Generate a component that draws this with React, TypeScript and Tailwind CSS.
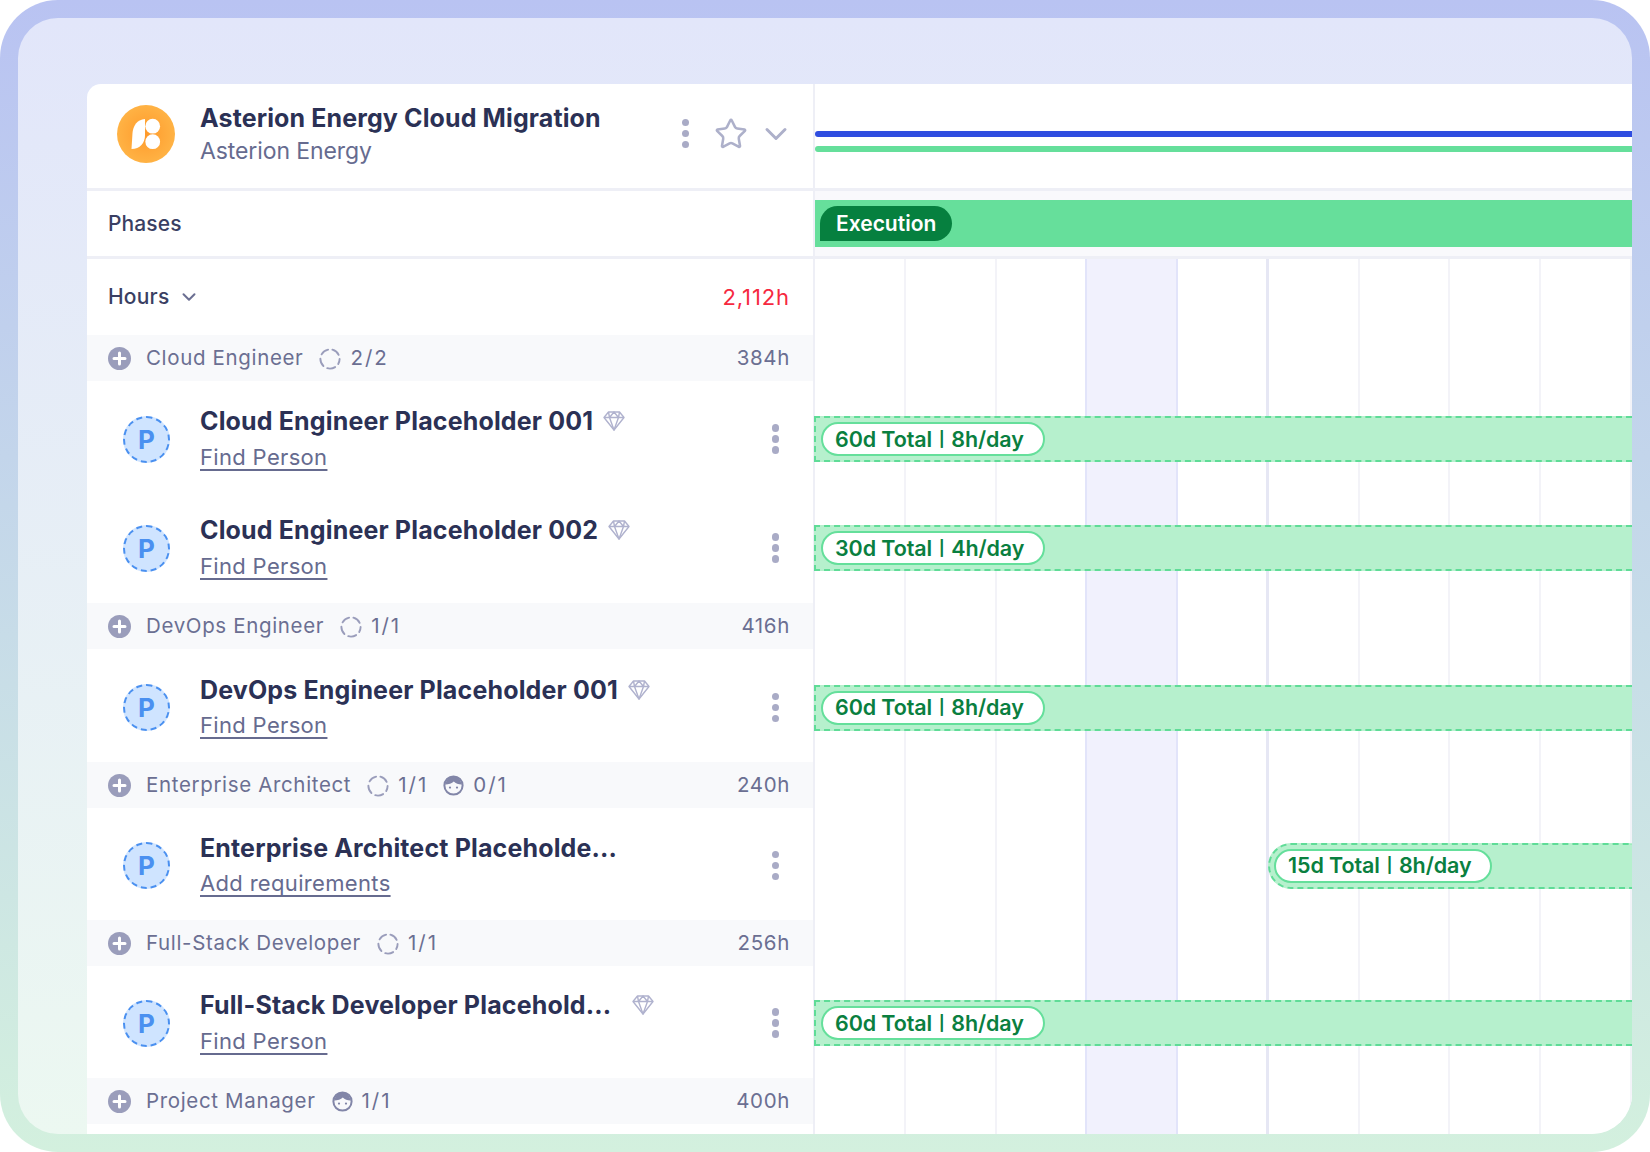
import React from "react";
import { Star, ChevronDown } from "lucide-react";

function Logo() {
  return (
    <svg width="58" height="58" viewBox="0 0 58 58" className="shrink-0">
      <defs>
        <radialGradient id="lg" cx="50%" cy="50%" r="55%">
          <stop offset="0%" stopColor="#ff9a2b" />
          <stop offset="100%" stopColor="#ffb547" />
        </radialGradient>
      </defs>
      <circle cx="29" cy="29" r="29" fill="url(#lg)" />
      <path d="M28 14 C20 14.5 16 21 15.5 28 L14.5 44 C23 44 28 38 28 30 Z" fill="#fff" />
      <circle cx="35.7" cy="21.2" r="7.4" fill="#fff" />
      <circle cx="35.7" cy="36.7" r="7.4" fill="#fff" />
    </svg>
  );
}

function Dots() {
  return (
    <div className="flex flex-col gap-[3.5px]">
      <span className="size-[7.5px] rounded-full bg-[#a9abc6]" />
      <span className="size-[7.5px] rounded-full bg-[#a9abc6]" />
      <span className="size-[7.5px] rounded-full bg-[#a9abc6]" />
    </div>
  );
}

function PlusCircle() {
  return (
    <svg width="23" height="23" viewBox="0 0 23 23" className="shrink-0">
      <circle cx="11.5" cy="11.5" r="11.5" fill="#9a9dbb" />
      <path d="M11.5 6v11M6 11.5h11" stroke="#fff" strokeWidth="3" strokeLinecap="round" />
    </svg>
  );
}

function DashCircle() {
  return (
    <svg width="22" height="22" viewBox="0 0 22 22" className="shrink-0">
      <circle cx="11" cy="11" r="9.6" fill="none" stroke="#9a9dbb" strokeWidth="1.9" strokeDasharray="8.2 4.4" strokeDashoffset="3" strokeLinecap="round" />
    </svg>
  );
}

function Face() {
  return (
    <svg width="21" height="21" viewBox="0 0 21 21" className="shrink-0">
      <circle cx="10.5" cy="10.5" r="9.1" fill="none" stroke="#8286a8" strokeWidth="2" />
      <path d="M2.5 9.5 C5.5 9.5 9 8.5 10.8 6.5 C12.5 8.5 15.5 9.5 18.5 9.5 C18 4.5 14.5 1.5 10.5 1.5 C6.5 1.5 3 4.5 2.5 9.5Z" fill="#8286a8" />
      <circle cx="7" cy="12.6" r="1.1" fill="#8286a8" />
      <circle cx="14" cy="12.6" r="1.1" fill="#8286a8" />
    </svg>
  );
}

function Diamond() {
  return (
    <svg width="22" height="20" viewBox="0 0 22 20" fill="none" stroke="#b0b2ce" strokeWidth="1.4" strokeLinejoin="round" className="shrink-0">
      <path d="M5.5 1h11l4.5 5.5L11 19 1 6.5Z" />
      <path d="M1 6.5h20M6.5 6.5 11 19l4.5-12.5M5.5 1l1 5.5L11 1l4.5 5.5 1-5.5" />
    </svg>
  );
}

function GroupHeader({ name, right, chips }: { name: string; right: string; chips: { icon: "dash" | "face"; text: string }[] }) {
  return (
    <div className="h-[46px] flex items-center pl-[21px] pr-[23px] pt-[1px] bg-[#f8f9fb] text-[#6b6f92] text-[20.5px] tracking-[0.65px]">
      <PlusCircle />
      <span className="ml-[15px] mr-[16px]">{name}</span>
      {chips.map((c, i) => (
        <span key={i} className="flex items-center gap-[9px] mr-[15px]">
          {c.icon === "dash" ? <DashCircle /> : <Face />}
          <span className="tracking-[2px]">{c.text}</span>
        </span>
      ))}
      <span className="ml-auto">{right}</span>
    </div>
  );
}

function Person({ title, link, sized, gap }: { title: string; link: string; sized: string; gap: string }) {
  return (
    <div className={`${sized} flex items-center pl-[36px] pr-[34px] bg-white`}>
      <div className="size-[47px] shrink-0 rounded-full bg-[#cfe4ff] border-2 border-dashed border-[#4a90f0] flex items-center justify-center text-[#4a90f0] font-bold text-[26px]">
        P
      </div>
      <div className="ml-[30px] flex-1 min-w-0">
        <div className="flex items-center h-[36px] pt-[1px]">
          <span className="text-[#2b3155] font-bold text-[25px] tracking-[0.15px] whitespace-nowrap">{title}</span>
          <span className={`${gap} -mt-[2px]`}>
            <Diamond />
          </span>
        </div>
        <a className="block text-[#666b8f] text-[22px] leading-[35px] tracking-[0.33px] underline underline-offset-[4px] decoration-[1.5px]">{link}</a>
      </div>
      <Dots />
    </div>
  );
}

function Bar({ text, round }: { text: string; round?: boolean }) {
  const [a, b] = text.split(" | ");
  return (
    <div
      className={
        round
          ? "ml-[453px] h-[46px] flex-1 flex items-center pl-[4px] bg-[#b6f0cd] border-2 border-r-0 border-dashed border-[#5fdc97] rounded-l-[23px]"
          : "-ml-[1px] h-[46px] flex-1 flex items-center pl-[5px] bg-[#b6f0cd] border-2 border-r-0 border-dashed border-[#5fdc97]"
      }
    >
      <span className="h-[34px] pl-[12px] pr-[19px] flex items-center rounded-full bg-white border-2 border-[#65df9b] text-[#0a7f3f] font-semibold text-[21.5px] tracking-[-0.1px] whitespace-pre">
        {a + " "}
        <span className="text-[15px] font-bold mx-[1.5px]">|</span>
        {" " + b}
      </span>
    </div>
  );
}

const rows = [
  { kind: "group", name: "Cloud Engineer", right: "384h", chips: [{ icon: "dash", text: "2/2" }] },
  { kind: "person", title: "Cloud Engineer Placeholder 001", link: "Find Person", sized: "h-[112px] pt-[4px]", gap: "ml-[10px]", bar: "60d Total | 8h/day" },
  { kind: "person", title: "Cloud Engineer Placeholder 002", link: "Find Person", sized: "h-[110px]", gap: "ml-[10px]", bar: "30d Total | 4h/day" },
  { kind: "group", name: "DevOps Engineer", right: "416h", chips: [{ icon: "dash", text: "1/1" }] },
  { kind: "person", title: "DevOps Engineer Placeholder 001", link: "Find Person", sized: "h-[113px] pt-[4px]", gap: "ml-[10px]", bar: "60d Total | 8h/day" },
  { kind: "group", name: "Enterprise Architect", right: "240h", chips: [{ icon: "dash", text: "1/1" }, { icon: "face", text: "0/1" }] },
  { kind: "person", title: "Enterprise Architect Placeholde...", link: "Add requirements", sized: "h-[112px] pt-[3px]", gap: "hidden", bar: "15d Total | 8h/day", round: true },
  { kind: "group", name: "Full-Stack Developer", right: "256h", chips: [{ icon: "dash", text: "1/1" }] },
  { kind: "person", title: "Full-Stack Developer Placehold...", link: "Find Person", sized: "h-[112px] pt-[2px]", gap: "ml-[21px]", bar: "60d Total | 8h/day" },
  { kind: "group", name: "Project Manager", right: "400h", chips: [{ icon: "face", text: "1/1" }] },
] as any[];

const gridCols = [
  "border-r-2 border-[#f3f3f8]",
  "border-r-2 border-[#f3f3f8]",
  "border-r-2 border-[#e2e4fa]",
  "border-r-2 border-[#e2e4fa] bg-[#f1f1fd]",
  "border-r-[3px] border-[#e6e7f4]",
  "border-r-2 border-[#f3f3f8]",
  "border-r-2 border-[#f3f3f8]",
  "border-r-2 border-[#f3f3f8]",
  "border-r-2 border-[#f3f3f8]",
];

export default function App() {
  return (
    <div className="w-[1650px] h-[1152px] bg-white" style={{ fontFamily: "Inter, 'Liberation Sans', sans-serif" }}>
      <div className="size-full rounded-[58px] p-[18px] bg-linear-to-b from-[#b9c3f2] to-[#d3f0de]">
        <div className="size-full rounded-[40px] overflow-hidden pl-[69px] pt-[66px] bg-linear-to-b from-[#e2e6fa] to-[#ecf8f1]">
          <div className="size-full bg-white rounded-tl-[14px] flex overflow-hidden">
            {/* left */}
            <div className="w-[726px] shrink-0 flex flex-col">
              <div className="h-[107px] shrink-0 border-b-[3px] border-[#eeeff6] flex items-center pl-[30px] pr-[19px] pb-[5px]">
                <Logo />
                <div className="ml-[25px] flex-1 pt-[2px]">
                  <div className="text-[#2b3155] font-bold text-[25px] leading-[33px] tracking-[0.12px]">Asterion Energy Cloud Migration</div>
                  <div className="text-[#666b8f] text-[23px] leading-[33px] tracking-[-0.1px]">Asterion Energy</div>
                </div>
                <Dots />
                <Star className="ml-[25px] text-[#adb0ca]" size={34} strokeWidth={1.8} />
                <ChevronDown className="ml-[10px] text-[#adb0ca]" size={36} strokeWidth={2} />
              </div>
              <div className="h-[68px] shrink-0 border-b-[3px] border-[#eeeff6] flex items-center pl-[21px] pt-[1px] text-[#3a3f63] text-[21px] font-medium tracking-[0.1px]">Phases</div>
              <div className="h-[76px] shrink-0 flex items-center pl-[21px] pr-[23px] text-[21px] tracking-[0.2px]">
                <span className="text-[#3a3f63] font-medium">Hours</span>
                <ChevronDown className="ml-[9px] text-[#6b6f92]" size={22} strokeWidth={2.2} />
                <span className="ml-auto text-[#f6283f] text-[22px] tracking-[0.9px]">2,112h</span>
              </div>
              {rows.map((r, i) =>
                r.kind === "group" ? (
                  <GroupHeader key={i} name={r.name} right={r.right} chips={r.chips} />
                ) : (
                  <Person key={i} title={r.title} link={r.link} sized={r.sized} gap={r.gap} />
                )
              )}
            </div>
            {/* right */}
            <div className="flex-1 min-w-0 border-l-2 border-[#eeeff6] flex flex-col">
              <div className="h-[107px] shrink-0 border-b-[3px] border-[#eeeff6] pt-[47px]">
                <div className="h-[6px] bg-[#2f4de0] rounded-l-full" />
                <div className="h-[6px] mt-[9px] bg-[#65df9b] rounded-l-full" />
              </div>
              <div className="h-[68px] shrink-0 border-b-[3px] border-[#eeeff6] bg-[#f9f9fc] pt-[9px]">
                <div className="h-[47px] bg-[#66df9b] pl-[5px] flex items-center">
                  <span className="h-[35px] w-[132px] flex items-center pl-[16px] bg-[#06803f] rounded-tl-[18px] rounded-bl-none rounded-tr-[18px] rounded-br-[18px] text-white font-semibold text-[21px]">Execution</span>
                </div>
              </div>
              <div className="relative flex-1 min-h-0">
                <div className="absolute inset-0 grid grid-cols-9">
                  {gridCols.map((c, i) => (
                    <div key={i} className={c} />
                  ))}
                </div>
                <div className="relative pt-[76px]">
                  {rows.map((r, i) =>
                    r.kind === "group" ? (
                      <div key={i} className="h-[46px]" />
                    ) : (
                      <div key={i} className={`${r.sized} flex items-center`}>
                        <Bar text={r.bar} round={r.round} />
                      </div>
                    )
                  )}
                </div>
              </div>
            </div>
          </div>
        </div>
      </div>
    </div>
  );
}
